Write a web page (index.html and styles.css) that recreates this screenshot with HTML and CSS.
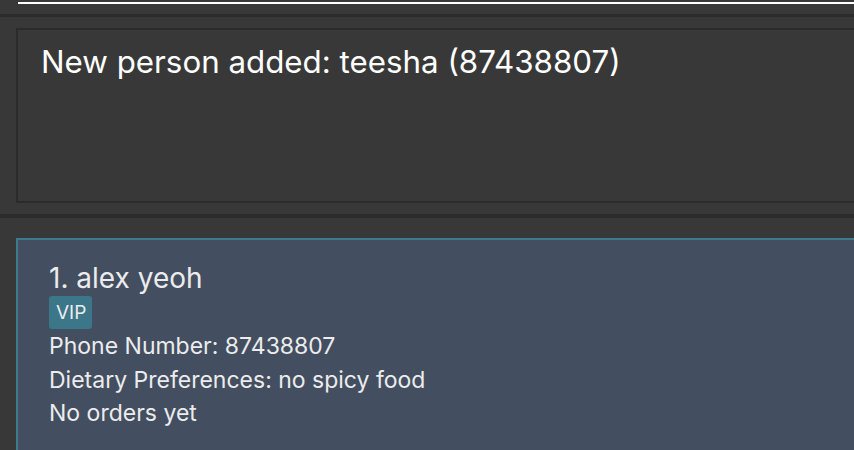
FILE: index.html
```html
<!DOCTYPE html>
<html>
<head>
<meta charset="utf-8">
<link rel="stylesheet" href="styles.css">
</head>
<body>
<div class="app">
  <div class="command">
    <div class="command-line"></div>
  </div>
  <div class="sep sep-top"></div>
  <div class="result-wrap">
    <div class="result-box">
      <div class="result-text">New person added: teesha (87438807)</div>
    </div>
  </div>
  <div class="sep sep-bottom"></div>
  <div class="list">
    <div class="card">
      <div class="name">1. alex yeoh</div>
      <div class="tags"><span class="tag">VIP</span></div>
      <div class="field">Phone Number: 87438807</div>
      <div class="field">Dietary Preferences: no spicy food</div>
      <div class="field">No orders yet</div>
    </div>
  </div>
</div>
</body>
</html>
```
FILE: styles.css
```css
html, body {
  margin: 0;
  padding: 0;
  background: #383838;
  overflow: hidden;
  width: 854px;
  height: 450px;
}
.app {
  font-family: Inter, "Noto Sans", sans-serif;
  color: #ffffff;
}
.command {
  height: 14px;
  padding-left: 18px;
  box-sizing: border-box;
  padding-top: 2px;
}
.command-line {
  height: 2px;
  background: #ffffff;
}
.sep {
  background: #2b2b2b;
}
.sep-top {
  height: 3px;
}
.result-wrap {
  padding: 11px 0 11px 16px;
}
.result-box {
  height: 175px;
  box-sizing: border-box;
  border: 2px solid #2b2b2b;
  border-right: none;
  padding: 13px 0 0 23px;
}
.result-text {
  font-size: 31.3px;
  line-height: 38px;
  color: #ffffff;
}
.sep-bottom {
  height: 4px;
}
.list {
  padding: 20px 0 0 16px;
}
.card {
  height: 212px;
  box-sizing: border-box;
  background: #434f61;
  border: 2px solid #3c7a8c;
  border-right: none;
  border-bottom: none;
  padding: 20px 0 0 31px;
  color: #ececec;
}
.name {
  font-size: 28px;
  line-height: 36px;
}
.tags {
  display: flex;
  margin-top: 0;
  margin-bottom: 1px;
}
.tag {
  background: #3b7689;
  border-radius: 3px;
  font-size: 19px;
  line-height: 33px;
  padding: 0 6px 0 7px;
  color: #ececec;
}
.field {
  font-size: 23px;
  line-height: 33.7px;
}
```
